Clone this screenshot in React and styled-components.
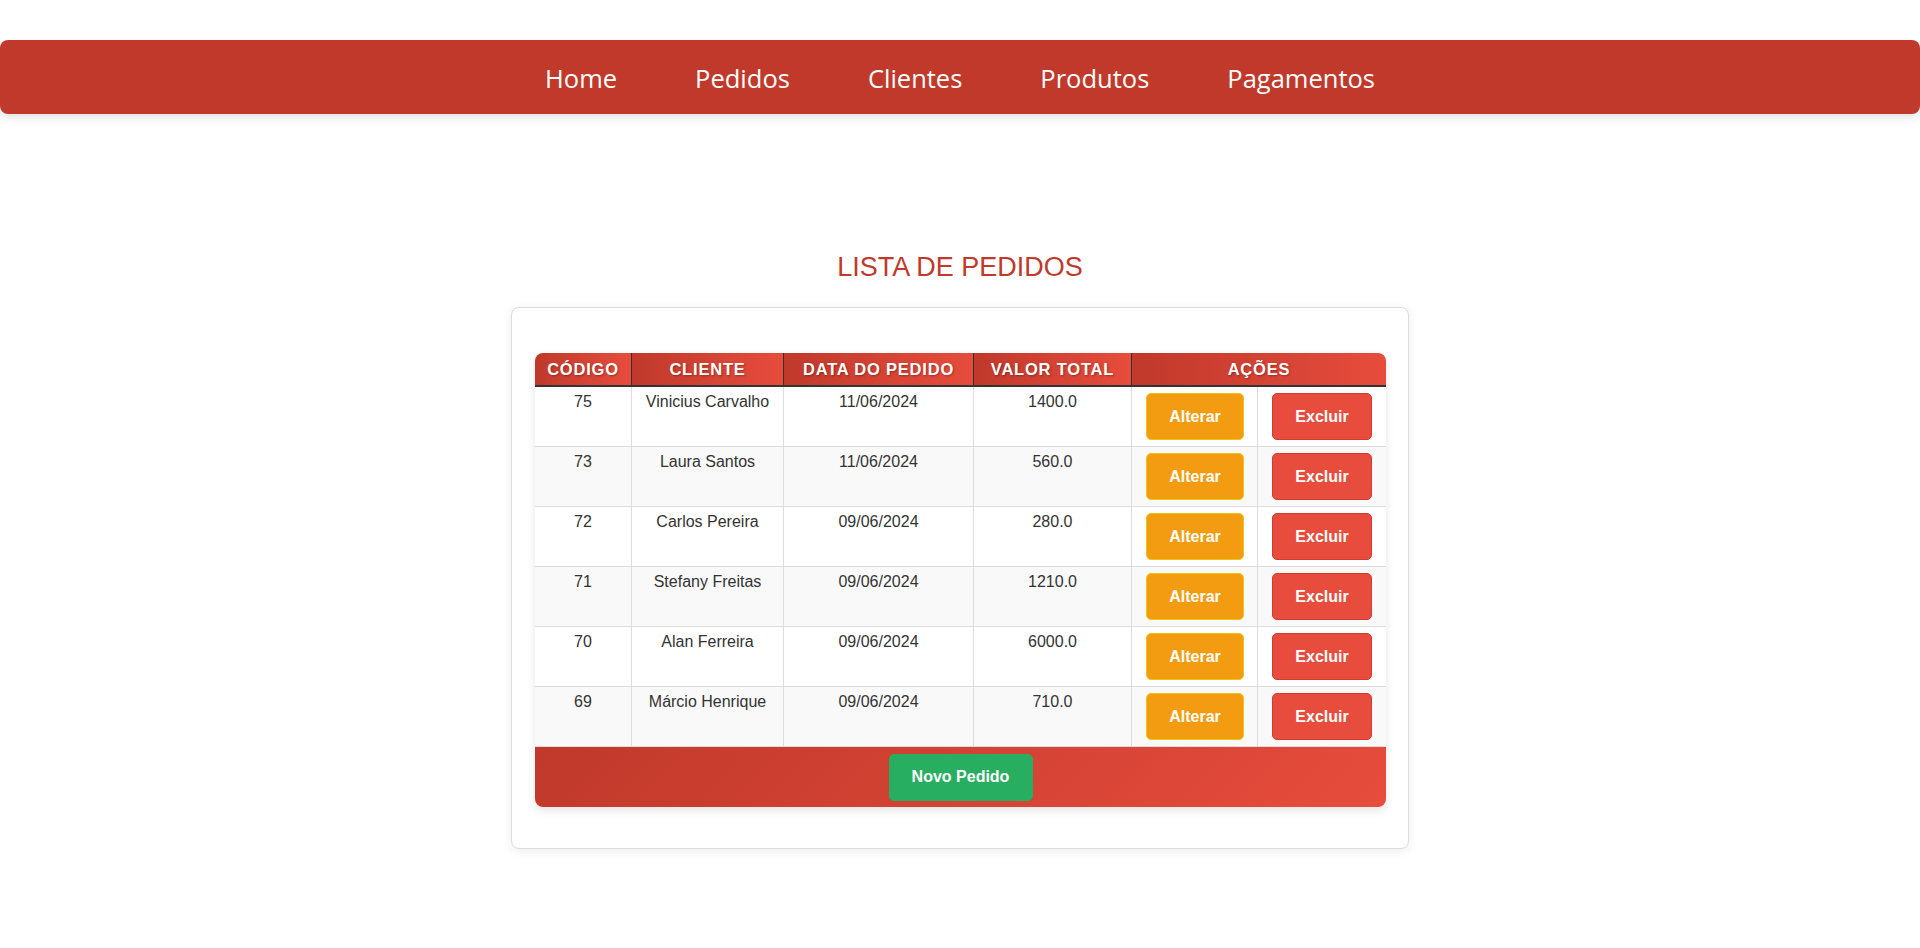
import React from "react";
import styled, { createGlobalStyle } from "styled-components";

const GlobalStyle = createGlobalStyle`
  html, body { margin: 0; padding: 0; background: #ffffff; }
  body { font-family: "Liberation Sans", Arial, sans-serif; color: #333; }
  * { box-sizing: border-box; }
`;

const Page = styled.div`
  padding-top: 40px;
  min-height: 948px;
`;

const NavBar = styled.nav`
  height: 74px;
  background: #c0392b;
  border-radius: 8px;
  box-shadow: 0 4px 8px rgba(0, 0, 0, 0.1);
  display: flex;
  align-items: center;
  justify-content: center;
  padding-top: 4px;
`;

const NavList = styled.ul`
  list-style: none;
  margin: 0;
  padding: 0;
  display: flex;
  gap: 78px;
`;

const NavLink = styled.a`
  font-family: "Open Sans", "Noto Sans", sans-serif;
  font-size: 25.5px;
  color: #ffffff;
  text-decoration: none;
  line-height: 1;
`;

const Main = styled.main`
  display: flex;
  flex-direction: column;
  align-items: center;
  padding-top: 138px;
`;

const Title = styled.h2`
  margin: 0 0 25px;
  font-family: "Liberation Sans", Arial, sans-serif;
  font-weight: 400;
  font-size: 27px;
  line-height: 30px;
  color: #c0392b;
`;

const Card = styled.section`
  width: 898px;
  background: #fff;
  border: 1px solid #ddd;
  border-radius: 8px;
  box-shadow: 0 2px 10px rgba(0, 0, 0, 0.08);
  padding: 45px 23px 41px;
`;

const Table = styled.table`
  width: 851px;
  table-layout: fixed;
  border-collapse: separate;
  border-spacing: 0;
  border-radius: 8px;
  overflow: hidden;
  box-shadow: 0 4px 8px rgba(0, 0, 0, 0.1);
  font-size: 16px;
`;

const HeadCell = styled.th`
  background: linear-gradient(to right, #c0392b, #e74c3c);
  color: #fff;
  font-weight: 700;
  font-size: 16.5px;
  letter-spacing: 0.8px;
  text-transform: uppercase;
  text-shadow: 1px 1px 2px rgba(0, 0, 0, 0.3);
  padding: 7px 4px;
  line-height: 18px;
  text-align: center;
  border-bottom: 2px solid #333;
  border-right: ${(p) => (p.$last ? "none" : "1px solid #333")};
  white-space: nowrap;
`;

const Row = styled.tr`
  background: ${(p) => (p.$striped ? "#f9f9f9" : "#ffffff")};
`;

const Cell = styled.td`
  padding: 6px 8px;
  vertical-align: top;
  text-align: center;
  line-height: 18px;
  color: #333;
  border-bottom: 1px solid #ddd;
  border-right: ${(p) => (p.$last ? "none" : "1px solid #ddd")};
`;

const ActionCell = styled(Cell)`
  padding: 6px 14px;
`;

const Button = styled.button`
  height: 47px;
  width: ${(p) => p.$width || "auto"};
  padding: 0 22px;
  border-radius: 5px;
  font-family: "Liberation Sans", Arial, sans-serif;
  font-size: 16px;
  font-weight: 700;
  color: #fff;
  cursor: pointer;
  background: ${(p) => p.$bg};
  border: 1px solid ${(p) => p.$border};
`;

const FootCell = styled.td`
  background: linear-gradient(135deg, #c0392b, #e74c3c);
  padding: 6px;
  text-align: center;
  height: 60px;
`;

const pedidos = [
  { codigo: 75, cliente: "Vinicius Carvalho", data: "11/06/2024", valor: "1400.0" },
  { codigo: 73, cliente: "Laura Santos", data: "11/06/2024", valor: "560.0" },
  { codigo: 72, cliente: "Carlos Pereira", data: "09/06/2024", valor: "280.0" },
  { codigo: 71, cliente: "Stefany Freitas", data: "09/06/2024", valor: "1210.0" },
  { codigo: 70, cliente: "Alan Ferreira", data: "09/06/2024", valor: "6000.0" },
  { codigo: 69, cliente: "Márcio Henrique", data: "09/06/2024", valor: "710.0" },
];

const links = ["Home", "Pedidos", "Clientes", "Produtos", "Pagamentos"];

export default function App() {
  return (
    <Page>
      <GlobalStyle />
      <NavBar>
        <NavList>
          {links.map((l) => (
            <li key={l}>
              <NavLink href="#">{l}</NavLink>
            </li>
          ))}
        </NavList>
      </NavBar>
      <Main>
        <Title>LISTA DE PEDIDOS</Title>
        <Card>
          <Table>
            <colgroup>
              <col style={{ width: 97 }} />
              <col style={{ width: 152 }} />
              <col style={{ width: 190 }} />
              <col style={{ width: 158 }} />
              <col style={{ width: 126 }} />
              <col style={{ width: 128 }} />
            </colgroup>
            <thead>
              <tr>
                <HeadCell>Código</HeadCell>
                <HeadCell>Cliente</HeadCell>
                <HeadCell>Data do Pedido</HeadCell>
                <HeadCell>Valor Total</HeadCell>
                <HeadCell colSpan={2} $last>
                  Ações
                </HeadCell>
              </tr>
            </thead>
            <tbody>
              {pedidos.map((p, i) => (
                <Row key={p.codigo} $striped={i % 2 === 1}>
                  <Cell>{p.codigo}</Cell>
                  <Cell>{p.cliente}</Cell>
                  <Cell>{p.data}</Cell>
                  <Cell>{p.valor}</Cell>
                  <ActionCell>
                    <Button $bg="#f39c12" $border="#f1c40f" $width="98px">
                      Alterar
                    </Button>
                  </ActionCell>
                  <ActionCell $last>
                    <Button $bg="#e74c3c" $border="#d63a2e" $width="100px">
                      Excluir
                    </Button>
                  </ActionCell>
                </Row>
              ))}
            </tbody>
            <tfoot>
              <tr>
                <FootCell colSpan={6}>
                  <Button $bg="#27ae60" $border="#27ae60" $width="144px">
                    Novo Pedido
                  </Button>
                </FootCell>
              </tr>
            </tfoot>
          </Table>
        </Card>
      </Main>
    </Page>
  );
}
